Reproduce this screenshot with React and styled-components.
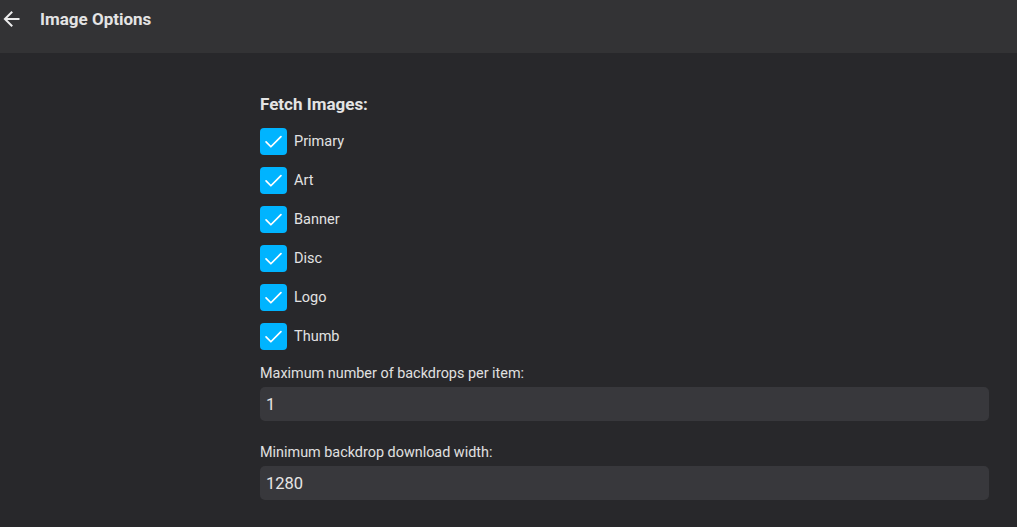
import React from "react";
import styled, { createGlobalStyle } from "styled-components";

const Global = createGlobalStyle`
  html, body { margin: 0; padding: 0; background: #28282b; }
  body { font-family: Roboto, "Noto Sans", sans-serif; color: #e6e6e6; }
  * { box-sizing: border-box; }
`;

const Page = styled.div`
  width: 1017px;
  height: 527px;
  overflow: hidden;
  display: flex;
  flex-direction: column;
  background: #28282b;
`;

const Header = styled.header`
  height: 53px;
  flex: none;
  background: #333335;
  display: flex;
  align-items: flex-start;
  padding-top: 7px;
`;

const BackButton = styled.button`
  width: 24px;
  height: 24px;
  padding: 0;
  border: none;
  background: none;
  color: #ededed;
  display: flex;
  align-items: center;
  justify-content: center;
  cursor: pointer;
`;

const Title = styled.h1`
  margin: 0 0 0 16px;
  font-size: 17px;
  font-weight: 700;
  line-height: 24px;
  color: #e4e4e4;
`;

const Content = styled.main`
  flex: 1;
  padding: 40px 28px 0 260px;
  display: flex;
  flex-direction: column;
`;

const SectionTitle = styled.h2`
  margin: 0 0 13px;
  font-size: 17px;
  font-weight: 700;
  line-height: 22px;
  color: #e4e4e4;
`;

const CheckList = styled.div`
  display: flex;
  flex-direction: column;
  gap: 12px;
`;

const CheckRow = styled.label`
  display: flex;
  align-items: center;
  gap: 7px;
  height: 27px;
  font-size: 14.5px;
  color: #e2e2e2;
`;

const Box = styled.span`
  width: 27px;
  height: 27px;
  border-radius: 4px;
  background: ${(p) => (p.$checked ? "#00b4ff" : "transparent")};
  display: flex;
  align-items: center;
  justify-content: center;
  flex: none;
`;

const Field = styled.div`
  display: flex;
  flex-direction: column;
  margin-top: ${(p) => p.$mt}px;
`;

const FieldLabel = styled.label`
  font-size: 14.4px;
  line-height: 18px;
  color: #e0e0e0;
  margin-bottom: 4px;
`;

const Input = styled.input`
  height: 34px;
  width: 100%;
  border: none;
  border-radius: 5px;
  background: #38383c;
  color: #e6e6e6;
  font-family: Roboto, "Noto Sans", sans-serif;
  font-size: 16.5px;
  padding: 0 6px;
  outline: none;
`;

const Check = () => (
  <svg width="21" height="21" viewBox="0 0 24 24" fill="none">
    <path d="M3.5 12.5l5.5 5.5L20.5 6.5" stroke="#fff" strokeWidth="2" strokeLinecap="round" strokeLinejoin="round" />
  </svg>
);

const items = ["Primary", "Art", "Banner", "Disc", "Logo", "Thumb"];

export default function App() {
  return (
    <Page>
      <Global />
      <Header>
        <BackButton aria-label="Back">
          <svg width="24" height="24" viewBox="0 0 24 24">
            <path fill="currentColor" d="M20 11H7.83l5.59-5.59L12 4l-8 8 8 8 1.41-1.41L7.83 13H20v-2z" transform="translate(-0.5 0)" />
          </svg>
        </BackButton>
        <Title>Image Options</Title>
      </Header>
      <Content>
        <SectionTitle>Fetch Images:</SectionTitle>
        <CheckList>
          {items.map((it) => (
            <CheckRow key={it}>
              <Box $checked>
                <Check />
              </Box>
              {it}
            </CheckRow>
          ))}
        </CheckList>
        <Field $mt={15}>
          <FieldLabel>Maximum number of backdrops per item:</FieldLabel>
          <Input defaultValue="1" />
        </Field>
        <Field $mt={23}>
          <FieldLabel>Minimum backdrop download width:</FieldLabel>
          <Input defaultValue="1280" />
        </Field>
      </Content>
    </Page>
  );
}
